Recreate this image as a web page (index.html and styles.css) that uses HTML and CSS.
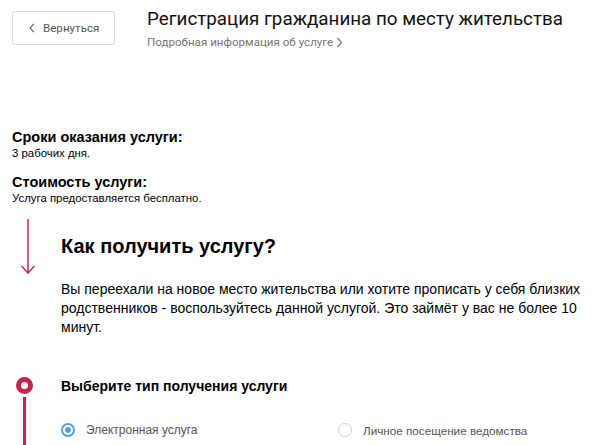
FILE: index.html
```html
<!DOCTYPE html>
<html lang="ru">
<head>
<meta charset="utf-8">
<link rel="stylesheet" href="styles.css">
</head>
<body>
<div class="page">
  <header class="header">
    <button class="back"><span class="back-ico"><svg width="6" height="12" viewBox="0 0 6 12"><path d="M4.8 1.8 L1 6 L4.8 10.2" fill="none" stroke="#666" stroke-width="1.2"/></svg></span>Вернуться</button>
    <div class="title-block">
      <h1 class="title">Регистрация гражданина по месту жительства</h1>
      <div class="subtitle">Подробная информация об услуге <svg width="7" height="11" viewBox="0 0 7 11"><path d="M1.5 1 L5.5 5.5 L1.5 10" fill="none" stroke="#777" stroke-width="1.2"/></svg></div>
    </div>
  </header>

  <section class="info">
    <div class="info-item">
      <div class="info-label">Сроки оказания услуги:</div>
      <div class="info-value">3 рабочих дня.</div>
    </div>
    <div class="info-item">
      <div class="info-label">Стоимость услуги:</div>
      <div class="info-value">Услуга предоставляется бесплатно.</div>
    </div>
  </section>

  <section class="how">
    <div class="how-rail">
      <svg width="16" height="56" viewBox="0 0 16 56"><path d="M8 0 V54" stroke="#b5386c" stroke-width="1.6" fill="none"/><path d="M1.5 47 L8 54 L14.5 47" stroke="#b5386c" stroke-width="1.6" fill="none"/></svg>
    </div>
    <div class="how-body">
      <h2 class="how-title">Как получить услугу?</h2>
      <p class="how-text">Вы переехали на новое место жительства или хотите прописать у себя близких родственников - воспользуйтесь данной услугой. Это займёт у вас не более 10 минут.</p>
    </div>
  </section>

  <section class="step">
    <div class="step-rail">
      <span class="step-dot"></span>
      <span class="step-line"></span>
    </div>
    <div class="step-body">
      <h3 class="step-title">Выберите тип получения услуги</h3>
      <div class="options">
        <label class="option"><span class="radio radio-on"></span>Электронная услуга</label>
        <label class="option"><span class="radio"></span>Личное посещение ведомства</label>
      </div>
    </div>
  </section>
</div>
</body>
</html>
```

FILE: styles.css
```css
html, body {
  margin: 0;
  padding: 0;
  background: #fff;
  height: 445px;
  overflow: hidden;
}
.page {
  font-family: "Liberation Sans", Arial, sans-serif;
  color: #000;
  padding: 11px 12px 0 12px;
}
.header {
  display: flex;
  align-items: flex-start;
}
.back {
  flex-shrink: 0;
  width: 103px;
  height: 34px;
  border: 1px solid #dcdcdc;
  border-radius: 2px;
  background: #fff;
  font-family: Roboto, sans-serif;
  font-size: 11.6px;
  color: #555;
  display: flex;
  align-items: center;
  padding: 0 0 0 16px;
  box-sizing: border-box;
  cursor: pointer;
}
.back-ico {
  display: inline-flex;
  margin-right: 8px;
}
.title-block {
  margin-left: 32px;
  margin-top: -6px;
}
.title {
  font-family: Roboto, sans-serif;
  font-weight: 400;
  font-size: 18.8px;
  line-height: 28px;
  margin: 0;
  color: #111;
  white-space: nowrap;
}
.subtitle {
  font-family: Roboto, sans-serif;
  font-size: 11.6px;
  color: #777;
  line-height: 16px;
  margin-top: 1px;
  display: flex;
  align-items: center;
  gap: 3px;
}
.info {
  margin-top: 79px;
}
.info-item {
  margin-bottom: 14px;
}
.info-label {
  font-weight: 700;
  font-size: 14.5px;
  line-height: 17px;
}
.info-value {
  font-size: 11.4px;
  line-height: 14px;
}
.how {
  display: flex;
  margin-top: 3px;
}
.how-rail {
  flex-shrink: 0;
  width: 49px;
  padding-left: 8px;
  box-sizing: border-box;
}
.how-rail svg {
  display: block;
}
.how-body {
  width: 535px;
}
.how-title {
  font-size: 20px;
  font-weight: 700;
  line-height: 24px;
  margin: 15px 0 0 0;
}
.how-text {
  font-size: 14px;
  line-height: 19px;
  margin: 22px 0 0 0;
}
.step {
  display: flex;
  margin-top: 40px;
}
.step-rail {
  flex-shrink: 0;
  width: 49px;
  display: flex;
  flex-direction: column;
  align-items: flex-start;
  padding-left: 4px;
  box-sizing: border-box;
}
.step-dot {
  width: 17px;
  height: 17px;
  border-radius: 50%;
  background: #fff;
  border: 5.5px solid #c2264f;
  box-sizing: border-box;
}
.step-line {
  width: 2.5px;
  height: 60px;
  background: #c2264f;
  margin-left: 7.25px;
  margin-top: 3px;
}
.step-body {
  flex: 1;
}
.step-title {
  font-size: 14px;
  font-weight: 700;
  line-height: 18px;
  margin: 0;
}
.options {
  display: flex;
  margin-top: 28px;
}
.option {
  display: flex;
  align-items: center;
  font-size: 12px;
  color: #555;
  width: 277px;
  flex-shrink: 0;
}
.option:last-child {
  font-size: 11.7px;
}
.radio {
  width: 14px;
  height: 14px;
  border-radius: 50%;
  border: 1px solid #cfcfcf;
  box-sizing: border-box;
  margin-right: 11px;
  position: relative;
}
.radio-on {
  border: 2px solid #5aa0d6;
}
.radio-on::after {
  content: "";
  position: absolute;
  left: 2px;
  top: 2px;
  width: 6px;
  height: 6px;
  border-radius: 50%;
  background: #5aa0d6;
}
```
